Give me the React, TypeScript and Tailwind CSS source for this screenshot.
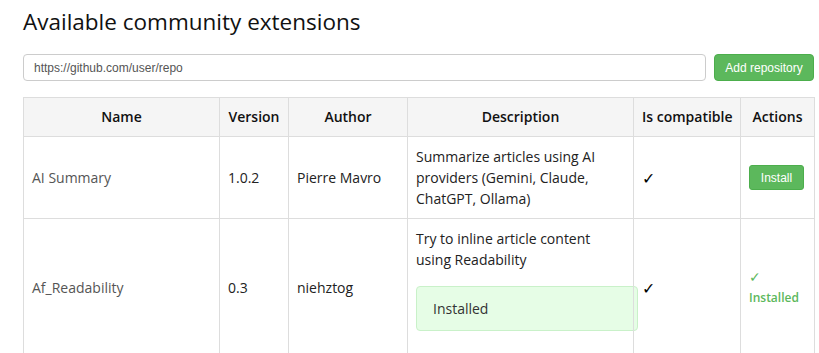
import React from "react";

const cell = "border border-[#ddd] px-2 py-[9px] align-middle";
const head = "border border-[#ddd] px-2 py-[9px] leading-[20px] text-center font-semibold whitespace-nowrap text-[#111]";

export default function App() {
  return (
    <div className="min-h-screen bg-white pl-[23px] pr-[5px] font-['Open_Sans',sans-serif] text-sm leading-[21px] text-[#222]">
      <h1 className="pt-[7px] text-[22.5px] leading-[30px] font-normal text-[#111]">
        Available community extensions
      </h1>

      <div className="mt-[17px] flex gap-2">
        <input
          className="h-[27px] flex-1 rounded-[4px] border border-[#ccc] px-[10px] font-['Liberation_Sans',Arial,sans-serif] text-xs text-[#555] placeholder:text-[#555] outline-none"
          placeholder="https://github.com/user/repo"
        />
        <button className="h-[27px] w-[100px] rounded-[4px] border border-[#4cae4c] bg-[#5cb85c] font-['Liberation_Sans',Arial,sans-serif] text-xs text-white">
          Add repository
        </button>
      </div>

      <table className="mt-[16px] w-[791px] table-fixed border-collapse">
        <colgroup>
          <col className="w-[196px]" />
          <col className="w-[69px]" />
          <col className="w-[119px]" />
          <col className="w-[226px]" />
          <col className="w-[107px]" />
          <col className="w-[74px]" />
        </colgroup>
        <thead>
          <tr className="bg-[#f5f5f5]">
            <th className={head}>Name</th>
            <th className={head}>Version</th>
            <th className={head}>Author</th>
            <th className={head}>Description</th>
            <th className={head}>Is compatible</th>
            <th className={head}>Actions</th>
          </tr>
        </thead>
        <tbody>
          <tr>
            <td className={cell + " text-[#555]"}>AI Summary</td>
            <td className={cell}>1.0.2</td>
            <td className={cell}>Pierre Mavro</td>
            <td className={cell + " py-[8px]"}>Summarize articles using AI providers (Gemini, Claude, ChatGPT, Ollama)</td>
            <td className={cell + " text-base text-black"}>✓</td>
            <td className={cell}>
              <button className="h-[25px] w-[55px] rounded-[3px] border border-[#4cae4c] bg-[#5cb85c] font-['Liberation_Sans',Arial,sans-serif] text-xs text-white">
                Install
              </button>
            </td>
          </tr>
          <tr>
            <td className={cell + " text-[#555]"}>Af_Readability</td>
            <td className={cell}>0.3</td>
            <td className={cell}>niehztog</td>
            <td className={cell + " overflow-visible"}>
              <p>Try to inline article content using Readability</p>
              <div className="mt-4 mb-4 w-[222px] rounded-[4px] border border-[#c9f1c9] bg-[#e6fde6] px-4 py-[11px] text-[#333]">
                Installed
              </div>
            </td>
            <td className={cell + " text-base text-black"}>✓</td>
            <td className={cell + " text-xs leading-[22px] font-semibold text-[#5cb85c]"}>
              <div className="text-sm font-normal">✓</div>
              <div>Installed</div>
            </td>
          </tr>
        </tbody>
      </table>
    </div>
  );
}
